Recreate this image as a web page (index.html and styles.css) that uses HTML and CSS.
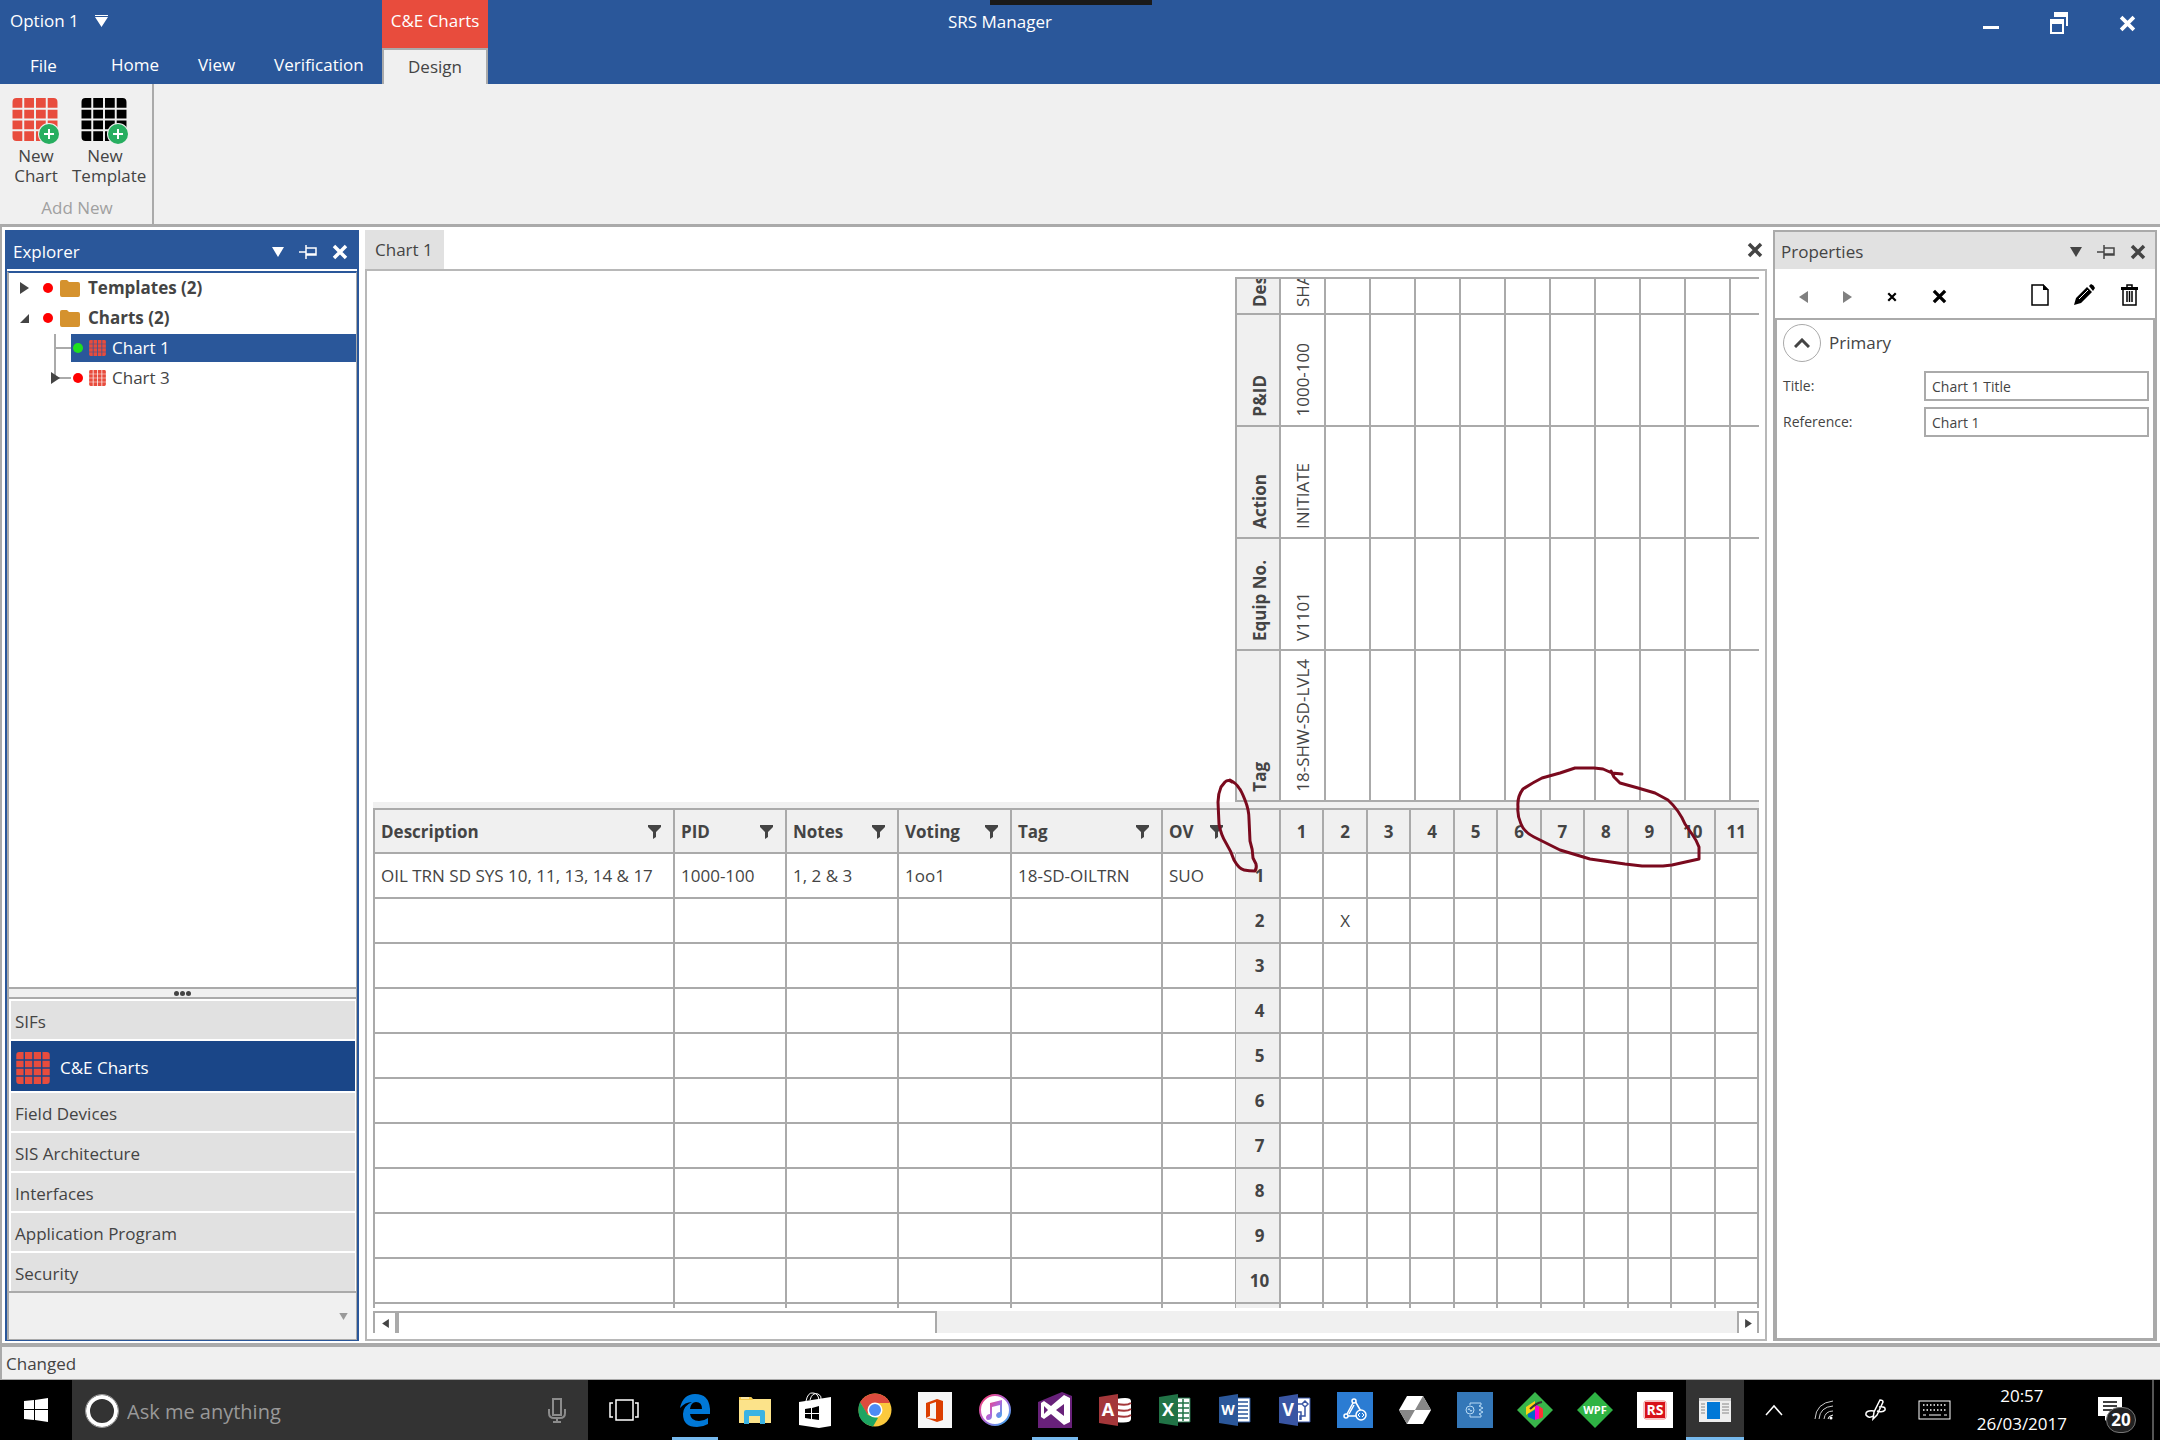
FILE: index.html
```html
<!DOCTYPE html>
<html lang="en">
<head>
  <meta charset="UTF-8">
  <meta name="viewport" content="width=device-width, initial-scale=1.0">
  <title>SRS Manager</title>
  <link rel="stylesheet" href="styles.css">
</head>

<body>
  <!-- shared icons -->
  <svg class="sprite" aria-hidden="true">
    <symbol id="grid" viewBox="0 0 46 44">
      <path d="M4 0h6v10H0V4q0-4 4-4zM12 0h10v10H12zM24 0h10v10H24zM36 0h6q4 0 4 4v6H36zM0 12h10v9H0zM12 12h10v9H12zM24 12h10v9H24zM36 12h10v9H36zM0 23h10v9H0zM12 23h10v9H12zM24 23h10v9H24zM36 23h10v9H36zM0 34h10v10H4q-4 0-4-4zM12 34h10v10H12zM24 34h10v10H24zM36 34h10v6q0 4-4 4h-6z"/>
    </symbol>
    <symbol id="filter" viewBox="0 0 13 14"><path d="M0 0h13v2L8 7v5l-3 2V7L0 2z"/></symbol>
    <symbol id="close" viewBox="0 0 16 16"><path d="M2 2l12 12M14 2L2 14" fill="none" stroke="currentColor" stroke-width="3.500"/></symbol>
    <symbol id="pin" viewBox="0 0 18 14"><path d="M0 7h7M7 0v14M7 3h10v7H7M7 9h10" fill="none" stroke="currentColor" stroke-width="1.500"/></symbol>
    <symbol id="down" viewBox="0 0 12 10"><path d="M0 0h12L6 10z"/></symbol>
    <symbol id="right" viewBox="0 0 9 12"><path d="M0 0l9 6-9 6z"/></symbol>
    <symbol id="left" viewBox="0 0 9 12"><path d="M9 0L0 6l9 6z"/></symbol>
    <symbol id="folder" viewBox="0 0 20 17"><path d="M0 2q0-2 2-2h5l2 2h9q2 0 2 2v11q0 2-2 2H2q-2 0-2-2z"/></symbol>
  </svg>

  <header class="title-bar">
    <button class="quick-option">Option 1
      <svg width="13" height="12" viewBox="0 0 13 12"><path d="M0 0h13v1H0zM0 2h13L6.500 12z"/></svg>
    </button>
    <nav class="menu">
      <a class="menu-file" href="#">File</a>
      <a class="menu-home" href="#">Home</a>
      <a href="#">View</a>
      <a href="#">Verification</a>
    </nav>
    <div class="context-tab">
      <span>C&amp;E Charts</span>
      <a href="#">Design</a>
    </div>
    <h1>SRS Manager</h1>
    <div class="notch"></div>
    <div class="window-buttons">
      <button aria-label="Minimize"><svg width="16" height="22"><path d="M0 14h16v3H0z"/></svg></button>
      <button aria-label="Restore"><svg width="18" height="22" viewBox="0 0 18 22"><path d="M4 0h14v14h-2V5H4zM0 7h14v15H0zm2 5v8h10v-8z" fill-rule="evenodd"/></svg></button>
      <button aria-label="Close"><svg width="17" height="17"><use href="#close"/></svg></button>
    </div>
  </header>

  <section class="ribbon">
    <div class="ribbon-group">
      <div class="ribbon-buttons">
        <button>
          <svg width="48" height="48" viewBox="0 0 48 48"><use class="red" href="#grid" width="46" height="43"/><circle cx="37" cy="36" r="11" fill="#f0f0f0"/><circle cx="37" cy="36" r="10" fill="#27ae60"/><path d="M32 36h10M37 31v10" stroke="#fff" stroke-width="2"/></svg>
          New<br>Chart
        </button>
        <button>
          <svg width="48" height="48" viewBox="0 0 48 48"><use href="#grid" fill="#000" width="46" height="43"/><circle cx="37" cy="36" r="11" fill="#f0f0f0"/><circle cx="37" cy="36" r="10" fill="#27ae60"/><path d="M32 36h10M37 31v10" stroke="#fff" stroke-width="2"/></svg>
          New<br>Template
        </button>
      </div>
      <p>Add New</p>
    </div>
  </section>

  <main class="workspace">
    <aside class="explorer">
      <div class="panel-header">
        <h2>Explorer</h2>
        <button aria-label="Explorer menu"><svg width="12" height="10"><use href="#down"/></svg></button>
        <button aria-label="Pin Explorer"><svg width="18" height="14"><use href="#pin"/></svg></button>
        <button aria-label="Close Explorer"><svg width="16" height="16"><use href="#close"/></svg></button>
      </div>
      <div class="explorer-body">
        <ul class="tree">
          <li class="folder"><svg class="arrow" width="9" height="12"><use href="#right"/></svg><i class="dot"></i><svg class="folder-icon" width="20" height="17"><use href="#folder"/></svg>Templates (2)</li>
          <li class="folder"><svg class="arrow" width="9" height="9"><path d="M9 0v9H0z"/></svg><i class="dot"></i><svg class="folder-icon" width="20" height="17"><use href="#folder"/></svg>Charts (2)</li>
          <li class="child">
            <svg class="branch" width="28" height="30"><path d="M12 1v29M12 15h16" stroke="#aaa" stroke-width="2"/></svg>
            <span class="selected"><i class="dot green"></i><svg class="red" width="17" height="16"><use href="#grid"/></svg>Chart 1</span>
          </li>
          <li class="child">
            <svg class="branch" width="28" height="30"><path d="M12 0v15h16" fill="none" stroke="#aaa" stroke-width="2"/><path d="M8 9l9 6-9 6z"/></svg>
            <span><i class="dot"></i><svg class="red" width="17" height="16"><use href="#grid"/></svg>Chart 3</span>
          </li>
        </ul>
        <div class="splitter"><i></i><i></i><i></i></div>
        <nav class="sections">
          <a href="#">SIFs</a>
          <a class="active" href="#"><svg class="red" width="34" height="32"><use href="#grid"/></svg>C&amp;E Charts</a>
          <a href="#">Field Devices</a>
          <a href="#">SIS Architecture</a>
          <a href="#">Interfaces</a>
          <a href="#">Application Program</a>
          <a href="#">Security</a>
        </nav>
        <div class="sections-footer"><svg width="9" height="7"><use href="#down"/></svg></div>
      </div>
    </aside>

    <section class="document">
      <div class="tabs">
        <a class="tab" href="#">Chart 1</a>
        <button aria-label="Close chart"><svg width="16" height="16"><use href="#close"/></svg></button>
      </div>
      <div class="chart">
        <div class="effects">
          <table id="effects"></table>
        </div>
        <div class="divider"></div>
        <div class="causes">
          <table id="causes">
            <thead></thead>
            <tbody></tbody>
          </table>
          <table id="matrix">
            <thead></thead>
            <tbody></tbody>
          </table>
        </div>
        <div class="scrollbar">
          <button aria-label="Scroll left"><svg width="7" height="9"><use href="#left"/></svg></button>
          <div class="track"><div class="thumb"></div></div>
          <button aria-label="Scroll right"><svg width="7" height="9"><use href="#right"/></svg></button>
        </div>
        <svg class="ink" width="1402" height="700" viewBox="365 269 1402 700">
          <path d="M1232 782Q1228 779 1225 782L1221 787Q1218 794 1218 802L1219 824Q1221 835 1226 843T1234 860Q1239 869 1244 870T1255 871Q1257 868 1256 864L1253 858Q1253 850 1250 841L1249 819Q1249 810 1245 800T1239 788Q1236 783 1230 780"/>
          <path d="M1622 774L1612 773 1603 769 1594 768H1575L1560 773 1542 778Q1532 783 1523 789 1517 797 1518 807 1517 815 1521 824 1524 832 1534 837L1542 841 1560 850 1590 859 1625 864 1642 866H1663L1672 865 1699 859V847Q1697 841 1692 834L1685 824Q1679 810 1668 800L1655 793 1638 788 1620 783 1614 777 1611 771"/>
        </svg>
      </div>
    </section>

    <aside class="properties">
      <div class="panel-header">
        <h2>Properties</h2>
        <button aria-label="Properties menu"><svg width="12" height="10"><use href="#down"/></svg></button>
        <button aria-label="Pin Properties"><svg width="18" height="14"><use href="#pin"/></svg></button>
        <button aria-label="Close Properties"><svg width="16" height="16"><use href="#close"/></svg></button>
      </div>
      <div class="toolbar">
        <button aria-label="Previous" disabled><svg width="9" height="12"><use href="#left"/></svg></button>
        <button aria-label="Next" disabled><svg width="9" height="12"><use href="#right"/></svg></button>
        <button aria-label="Remove"><svg width="10" height="10"><use href="#close"/></svg></button>
        <button aria-label="Remove all"><svg width="15" height="15"><use href="#close"/></svg></button>
        <span class="spacer"></span>
        <button aria-label="New"><svg width="18" height="22" viewBox="0 0 18 22"><path d="M1 1h11l5 5v15H1z" fill="#fff" stroke="#000" stroke-width="1.500"/><path d="M12 0l6 6h-6z"/></svg></button>
        <button aria-label="Edit"><svg width="22" height="22" viewBox="0 0 22 22"><path d="M0 21l2-7L13 3l5 5L7 19zM15 2l2-2q3 1 4 4l-2 3z"/><path d="M5 15l9-9" stroke="#fff"/></svg></button>
        <button aria-label="Delete"><svg width="17" height="22" viewBox="0 0 17 22"><path d="M0 3h17v3H0z"/><path d="M6 3V1h5v2M2 6v15h13V6M6 7v11M8.500 7v11M11 7v11" fill="none" stroke="#000" stroke-width="1.500"/></svg></button>
      </div>
      <form class="properties-body">
        <div class="group-title">
          <button type="button" aria-label="Collapse Primary"><svg width="16" height="10"><path d="M1 9l7-7 7 7" fill="none" stroke="#444" stroke-width="3"/></svg></button>
          Primary
        </div>
        <div class="field"><label for="title">Title:</label><input id="title" type="text" value="Chart 1 Title"></div>
        <div class="field"><label for="reference">Reference:</label><input id="reference" type="text" value="Chart 1"></div>
      </form>
    </aside>
  </main>

  <footer class="status-bar">Changed</footer>

  <div class="taskbar">
    <button class="start" aria-label="Start"><svg width="24" height="24" viewBox="0 0 24 24"><path d="M0 3l10-1v9H0zM11 2l13-2v11H11zM0 12h10v10L0 21zM11 12h13v12l-13-2z" fill="#fff"/></svg></button>
    <div class="search">
      <svg width="36" height="36"><circle cx="18" cy="18" r="14" fill="none" stroke="#fff" stroke-width="4"/><circle cx="18" cy="18" r="16.500" fill="none" stroke="#999"/></svg>
      <input type="text" placeholder="Ask me anything" aria-label="Search">
      <svg width="18" height="26" viewBox="0 0 18 26"><path d="M5 1h8v16H5zM1 11v4q0 5 5 5h6q5 0 5-5v-4M9 20v4M5 24h8" fill="none" stroke="#8c8c8c" stroke-width="2"/></svg>
    </div>
    <button class="task-view" aria-label="Task view"><svg width="30" height="22"><path d="M7 1h17v20H7zM4 4H1v14h3M26 4h3v14h-3" fill="none" stroke="#fff" stroke-width="1.500"/></svg></button>
    <div class="apps">
      <button class="running" aria-label="Edge"><svg viewBox="0 0 36 36"><path d="M3 16Q6 2 18 2q14 0 15 15v5H13q1 7 9 7 5 0 9-3v6q-5 3-11 3Q6 35 6 22q0-8 9-12-7 0-12 6zm10 1h12q0-7-6-7-5 0-6 7z" fill="#0078d7" fill-rule="evenodd"/></svg></button>
      <button aria-label="File Explorer"><svg viewBox="0 0 36 36"><path d="M2 5h12l2 2h18v24H2z" fill="#fce38a"/><path d="M2 5h12l2 3H2z" fill="#f3c94b"/><path d="M4 6h8" stroke="#fff"/><path d="M7 32V20q0-2 2-2h17q2 0 2 2v12h-5v-8H12v8z" fill="#3bb3e3"/></svg></button>
      <button aria-label="Store"><svg viewBox="0 0 36 36"><path d="M2 10l32-5v29l-12 2-20-3z" fill="#fff"/><path d="M9 9q2-9 7-8 5 0 6 7M13 8q2-8 8-6 4 2 3 5" fill="none" stroke="#fff"/><path d="M8 17l6-1v5H8zM15 16l7-2v7h-7zM8 22h6v5l-6-1zM15 22h7v6l-7-1z" fill="#000"/></svg></button>
      <button aria-label="Chrome"><svg viewBox="0 0 36 36"><circle cx="18" cy="18" r="16.500" fill="#fbc93d"/><path d="M18 18L10 22 3 10Q8 2 18 1.500 29 2 33 11H18z" fill="#dd4b3e"/><path d="M3 10l8 13 10 3-5 8.500Q1 31 1.500 18q0-5 1.500-8z" fill="#1da462"/><circle cx="18" cy="18" r="7.500" fill="#fff"/><circle cx="18" cy="18" r="6" fill="#4c8bf5"/></svg></button>
      <button aria-label="Office"><svg viewBox="0 0 36 36"><path d="M1 0h34v36H1z" fill="#f6f6f6"/><path d="M9 11l11-4 6 2v19l-6 2-11-4 10 1V10l-6 2v12l-4 2z" fill="#dc3e00"/></svg></button>
      <button aria-label="iTunes"><svg viewBox="0 0 36 36"><defs><linearGradient id="tunes" x2="1" y2="1"><stop stop-color="#fa3c6a"/><stop offset=".5" stop-color="#b266d9"/><stop offset="1" stop-color="#2fb4f3"/></linearGradient></defs><circle cx="18" cy="18" r="15" fill="#fff" stroke="url(#tunes)" stroke-width="2"/><path d="M13 11l12-3v14q0 4-4 4-2-1-2-3 1-3 4-3v-7l-8 2v9q0 4-4 4-2 0-2-3 1-3 4-3z" fill="url(#tunes)"/></svg></button>
      <button class="running" aria-label="Visual Studio"><svg viewBox="0 0 36 36"><path d="M1 10L25 0l10 4v32H1z" fill="#68217a"/><path d="M27 3l6 3v24l-6 3-13-11-7 5-3-2V11l3-2 7 5zm0 9l-8 6 8 6zM7 14v8l4-4z" fill="#fff" fill-rule="evenodd"/></svg></button>
      <button aria-label="Access"><svg viewBox="0 0 36 36"><path d="M19 7q15-3 15 2v18q0 5-15 3z" fill="#fff"/><path d="M20 12q10 2 14-1M20 18q10 2 14-1M20 24q10 2 14-1" fill="none" stroke="#a4373a" stroke-width="2"/><path d="M2 5l19-3v32L2 31z" fill="#a4373a"/><text x="11" y="24">A</text></svg></button>
      <button aria-label="Excel"><svg viewBox="0 0 36 36"><path d="M20 6h13v24H20z" fill="#fff" stroke="#217346" stroke-width="1"/><path d="M20 11h12M20 16h12M20 21h12M20 26h12M26 7v22" stroke="#217346" stroke-width="1.500"/><path d="M2 5l19-3v32L2 31z" fill="#217346"/><text x="11" y="24">X</text></svg></button>
      <button aria-label="Word"><svg viewBox="0 0 36 36"><path d="M20 6h13v24H20z" fill="#fff" stroke="#2b579a" stroke-width="1"/><path d="M20 10h11M20 14h11M20 18h11M20 22h11M20 26h11" stroke="#2b579a" stroke-width="1.500"/><path d="M2 5l19-3v32L2 31z" fill="#2b579a"/><text class="wide" x="11" y="23">W</text></svg></button>
      <button aria-label="Visio"><svg viewBox="0 0 36 36"><path d="M20 6h13v24H20z" fill="#fff" stroke="#3955a3" stroke-width="1"/><path d="M20 12h5l3-3 3 3-3 3-3-3M28 15v9h-5v4M20 20h4v8" fill="none" stroke="#3955a3" stroke-width="1.500"/><path d="M2 5l19-3v32L2 31z" fill="#3955a3"/><text x="11" y="24">V</text></svg></button>
      <button aria-label="Designer"><svg viewBox="0 0 36 36"><path d="M0 0h36v36H0z" fill="#2b7cd3"/><path d="M17 9L9 24h15M17 13l-5 9M18 9l7 12" fill="none" stroke="#fff" stroke-width="1.500"/><g fill="#2b7cd3" stroke="#fff" stroke-width="1.500"><circle cx="17" cy="9" r="2"/><circle cx="9" cy="24" r="2"/><circle cx="24" cy="23" r="5"/></g><path d="M23 21l-2 2 2 2M25 21l2 2-2 2" fill="none" stroke="#fff"/></svg></button>
      <button aria-label="Hexagon"><svg viewBox="0 0 36 36"><path d="M10 4h16l8 14-8 14H10L2 18z" fill="#fff"/><path d="M2 18h16l-8 14zM26 4l8 14H18z" fill="#888"/></svg></button>
      <button aria-label="Circuits"><svg viewBox="0 0 36 36"><path d="M0 0h36v36H0z" fill="#3477b8"/><path d="M13 13v-2h11v2l-2 1 4 2-4 2 4 2-4 2 2 1v2H13v-2" fill="none" stroke="#b9dbf5"/><circle cx="13" cy="18" r="4" fill="#3477b8" stroke="#b9dbf5"/><path d="M11 18q1-3 2 0t2 0" fill="none" stroke="#b9dbf5"/></svg></button>
      <button aria-label="Cube"><svg viewBox="0 0 36 36"><path d="M18 0l18 18-18 18L0 18z" fill="#39b54a"/><path d="M9 15l9-6v8l-9 6z" fill="#fcd116"/><path d="M18 12l8 5v8l-8 3z" fill="#f0c"/><path d="M22 14l4 3v8l-4 2z" fill="#f33"/><path d="M11 22l7-4v10l-7-3z" fill="#06c"/><path d="M13 17q6-6 12-7" stroke="#333" stroke-width="2" fill="none"/></svg></button>
      <button aria-label="WPF"><svg viewBox="0 0 36 36"><path d="M18 0l18 18-18 18L0 18z" fill="#2fb344"/><text class="small" x="18" y="22">WPF</text></svg></button>
      <button aria-label="RS"><svg viewBox="0 0 36 36"><path d="M0 0h36v36H0z" fill="#fff"/><rect x="7" y="9" width="22" height="18" rx="2" fill="#fff" stroke="#e88"/><path d="M8 10h20v16H8z" fill="#d8121a"/><text x="18" y="23" class="rs">RS</text></svg></button>
      <button class="running current" aria-label="SRS Manager"><svg viewBox="0 0 36 36"><path d="M2 6h32v24H2z" fill="#eee"/><path d="M2 6h32v3H2z" fill="#ccc"/><path d="M10 10h13v17H10z" fill="#0078d7"/><path d="M4 12h4M4 15h4M4 18h4M4 21h4M25 12h7M25 15h7M25 18h7M25 21h7" stroke="#888"/></svg></button>
    </div>
    <div class="tray">
      <button aria-label="Show hidden icons"><svg width="18" height="12"><path d="M1 11l8-9 8 9" fill="none" stroke="#fff" stroke-width="1.500"/></svg></button>
      <button aria-label="Network"><svg width="20" height="20"><path d="M1 19Q2 3 19 1M5 19Q6 7 19 6M10 19q1-8 9-8" fill="none" stroke="#ccc"/><path d="M14 19q0-3 5-4" fill="none" stroke="#fff"/><circle cx="17" cy="18" r="1.500" fill="#fff"/></svg></button>
      <button aria-label="Pen"><svg width="22" height="22" viewBox="0 0 22 22"><path d="M8 20l1-7 6-12q3 0 3 2l-6 13zM9 12Q0 11 1 16q3 4 7 1M14 8q7-1 6 3-2 3-8 1" fill="none" stroke="#fff" stroke-width="1.500"/></svg></button>
      <button aria-label="Keyboard"><svg width="34" height="20"><rect x="1" y="1" width="31" height="18" fill="none" stroke="#fff"/><path d="M5 5h24M5 10h24" stroke="#fff" stroke-width="1.500" stroke-dasharray="1.500 2"/><path d="M5 15h3M11 15h12M26 15h3" stroke="#fff"/></svg></button>
      <time datetime="2017-03-26T20:57">20:57<br>26/03/2017</time>
      <button class="notifications" aria-label="Notifications"><svg width="24" height="26"><path d="M0 0h24v19H11l-4 5v-5H0z" fill="#fff"/><path d="M5 5h14M5 9h14M5 13h14" stroke="#000" stroke-width="1.500"/></svg><span>20</span></button>
    </div>
  </div>

  <script>
    const EFFECTS = 11;
    const ROWS = 11;
    const effectRows = [["Des", "SHA"], ["P&amp;ID", "1000-100"], ["Action", "INITIATE"], ["Equip No.", "V1101"], ["Tag", "18-SHW-SD-LVL4"]];
    const causeColumns = ["Description", "PID", "Notes", "Voting", "Tag", "OV"];
    const causes = [["OIL TRN SD SYS 10, 11, 13, 14 &amp; 17", "1000-100", "1, 2 &amp; 3", "1oo1", "18-SD-OILTRN", "SUO"]];
    const marks = { "2-2": "X" };

    const range = count => Array(count).fill().map((_, index) => index + 1);

    document.getElementById("effects").innerHTML = effectRows.map(([name, value]) => `
      <tr>
        <th scope="row"><span>${name}</span></th>
        ${range(EFFECTS).map(n => `<td>${n == 1 ? `<span>${value}</span>` : ""}</td>`).join("")}
      </tr>`).join("");

    document.querySelector("#causes thead").innerHTML = `<tr>${causeColumns.map(name => `
      <th scope="col"><div>${name}<button aria-label="Filter ${name}"><svg width="13" height="14"><use href="#filter"/></svg></button></div></th>`).join("")}</tr>`;

    document.querySelector("#causes tbody").innerHTML = range(ROWS).map(row => `
      <tr>${causeColumns.map((_, i) => `<td>${causes[row - 1] ? causes[row - 1][i] : ""}</td>`).join("")}</tr>`).join("");

    document.querySelector("#matrix thead").innerHTML = `
      <tr><td></td>${range(EFFECTS).map(n => `<th scope="col">${n}</th>`).join("")}</tr>`;

    document.querySelector("#matrix tbody").innerHTML = range(ROWS).map(row => `
      <tr>
        <th scope="row">${row < ROWS ? row : ""}</th>
        ${range(EFFECTS).map(n => `<td>${marks[row + "-" + n] || ""}</td>`).join("")}
      </tr>`).join("");
  </script>
</body>
</html>
```
FILE: styles.css
```css
*{
  box-sizing: border-box;
}
body{
  margin: 0;
  height: 100vh;
  display: flex;
  flex-direction: column;
  font-family: "Open Sans", sans-serif;
  font-size: 17px;
  line-height: 20px;
  color: #444;
  background: #fff;
  overflow: hidden;
}
button{
  font: inherit;
  color: inherit;
  background: none;
  border: 0;
  padding: 0;
  display: flex;
  align-items: center;
  justify-content: center;
}
a{
  color: inherit;
  text-decoration: none;
}
h1, h2, p, ul{
  margin: 0;
  padding: 0;
  font-size: 17px;
  font-weight: normal;
}
svg{
  display: block;
  flex: none;
  fill: currentColor;
}
.sprite{
  position: absolute;
  width: 0;
  height: 0;
}
.red{
  fill: #e84c3d;
}

/* title bar and menu */
.title-bar{
  flex: none;
  height: 84px;
  display: grid;
  grid-template-columns: 382px 106px 1fr auto;
  grid-template-rows: 42px 42px;
  background: #2a579a;
  color: #fff;
}
.quick-option{
  justify-self: start;
  gap: 16px;
  padding-left: 10px;
}
.menu{
  grid-row: 2;
  grid-column: 1;
  display: flex;
  gap: 39px;
  padding: 13px 0 0 30px;
}
.menu-file{
  padding-top: 1px;
}
.menu-home{
  margin-left: 15px;
}
.context-tab{
  grid-row: 1 / 3;
  grid-column: 2;
  display: flex;
  flex-direction: column;
  text-align: center;
}
.context-tab span{
  height: 48px;
  line-height: 42px;
  background: #e84c3d;
}
.context-tab a{
  flex: 1;
  line-height: 34px;
  color: #444;
  background: #f0f0f0;
  border: 2px solid #aaa;
  border-bottom: 0;
}
.title-bar h1{
  grid-row: 1;
  grid-column: 3;
  padding-left: 460px;
  line-height: 43px;
}
.notch{
  position: absolute;
  top: 0;
  left: 990px;
  width: 162px;
  height: 5px;
  background: #1a1a1a;
}
.window-buttons{
  display: flex;
  align-items: center;
  gap: 51px;
  padding: 4px 24px 0 0;
}

/* ribbon */
.ribbon{
  flex: none;
  height: 143px;
  display: flex;
  background: #f0f0f0;
  border-bottom: 3px solid #aaa;
}
.ribbon-group{
  width: 154px;
  padding-top: 14px;
  border-right: 2px solid #aaa;
  text-align: center;
}
.ribbon-buttons{
  display: grid;
  grid-template-columns: 72px 66px;
}
.ribbon-buttons button{
  display: block;
}
.ribbon-buttons svg{
  margin: 0 auto;
}
.ribbon-group p{
  margin-top: 12px;
  padding-left: 2px;
  color: #a0a0a0;
}

/* docked panels */
.workspace{
  flex: 1;
  min-height: 0;
  display: flex;
  padding: 3px 3px 2px 3px;
  border-left: 2px solid #aaa;
}
.panel-header{
  flex: none;
  height: 39px;
  display: flex;
  align-items: center;
  gap: 15px;
  padding: 4px 9px 0 6px;
}
.panel-header h2{
  flex: 1;
}

/* explorer */
.explorer{
  flex: none;
  width: 354px;
  margin-right: 6px;
  display: flex;
  flex-direction: column;
  border: 2px solid #2a579a;
  border-width: 0 2px 1px;
}
.explorer .panel-header{
  height: 41px;
  color: #fff;
  background: #2a579a;
  border-bottom: 2px solid #fff;
}
.explorer-body{
  flex: 1;
  min-height: 0;
  display: flex;
  flex-direction: column;
  border: 1px solid #aaa;
  border-top: 2px solid #2a579a;
  border-left-width: 2px;
}
.tree{
  flex: 1;
  list-style: none;
}
.tree li{
  height: 30px;
  display: flex;
  align-items: center;
}
.folder{
  padding-left: 11px;
  font-weight: bold;
}
.folder-icon{
  margin: 0 8px 0 7px;
  fill: #d5922e;
}
.dot{
  width: 10px;
  height: 10px;
  border-radius: 50%;
  background: #f00;
}
.dot.green{
  background: #1fe01f;
}
.folder .dot{
  margin-left: 14px;
}
.branch{
  margin-left: 34px;
}
.child span{
  flex: 1;
  height: 28px;
  display: flex;
  align-items: center;
  gap: 6px;
  padding-left: 2px;
}
.child .selected{
  color: #fff;
  background: #2a579a;
}
.splitter{
  height: 12px;
  display: flex;
  align-items: center;
  justify-content: center;
  gap: 1px;
  background: #f0f0f0;
  border: 2px solid #aaa;
  border-width: 2px 0;
}
.splitter i{
  width: 5px;
  height: 5px;
  border-radius: 50%;
  background: #444;
}
.sections{
  display: flex;
  flex-direction: column;
  gap: 2px;
  padding: 2px 1px 0 2px;
}
.sections a{
  height: 38px;
  display: flex;
  align-items: center;
  gap: 10px;
  padding: 3px 4px 0;
  background: #e1e1e1;
}
.sections .active{
  height: 50px;
  padding-left: 5px;
  color: #fff;
  background: #1a4688;
}
.sections-footer{
  height: 48px;
  display: flex;
  align-items: center;
  justify-content: flex-end;
  padding-right: 8px;
  color: #999;
  background: #f0f0f0;
  border-top: 2px solid #aaa;
}

/* chart document */
.document{
  flex: 1;
  min-width: 0;
  display: flex;
  flex-direction: column;
}
.tabs{
  height: 39px;
  display: flex;
  justify-content: space-between;
  padding-right: 4px;
}
.tab{
  padding: 10px 11px 0 10px;
  background: #e1e1e1;
}
.chart{
  position: relative;
  flex: 1;
  min-height: 0;
  display: flex;
  flex-direction: column;
  padding: 6px;
  border: 2px solid #b8b8b8;
}
table{
  flex: none;
  table-layout: fixed;
  border-collapse: separate;
  border-spacing: 0;
}
th, td{
  padding: 0;
  border: 0 solid #aaa;
  border-width: 0 2px 2px 0;
}
th{
  background: #f0f0f0;
}
.effects{
  flex: none;
  display: flex;
  margin-left: 862px;
  border-top: 2px solid #aaa;
  overflow: hidden;
}
#effects{
  width: 541px;
}
#effects tr{
  height: 112px;
}
#effects tr:first-child{
  height: 36px;
}
#effects tr:last-child{
  height: 151px;
}
#effects th, #effects td{
  width: 45px;
  vertical-align: bottom;
}
#effects th{
  width: 46px;
  padding-left: 4px;
  border-left-width: 2px;
}
#effects span{
  display: block;
  margin: 0 auto 8px;
  line-height: 22px;
  writing-mode: vertical-rl;
  transform: rotate(180deg);
  white-space: nowrap;
}
#effects tr:first-child span{
  max-height: 28px;
  margin-bottom: 6px;
  overflow: hidden;
}
.divider{
  flex: none;
  height: 6px;
  background: #f0f0f0;
}
.causes{
  flex: 1;
  min-height: 0;
  display: flex;
  overflow: hidden;
  border-top: 2px solid #aaa;
}
.causes tr{
  height: 45px;
}
.causes thead tr{
  height: 44px;
}
#causes{
  width: 862px;
  border-left: 2px solid #aaa;
}
#causes th, #causes td{
  width: 112px;
  padding: 1px 0 0 6px;
  text-align: left;
  white-space: nowrap;
}
#causes th:nth-child(1){
  width: 300px;
}
#causes th:nth-child(4){
  width: 113px;
}
#causes th:nth-child(5){
  width: 151px;
}
#causes th:last-child, #causes td:last-child{
  width: 72px;
  border-right-width: 0;
}
#causes th div{
  display: flex;
  align-items: center;
  justify-content: space-between;
  padding-right: 12px;
}
#matrix{
  width: calc(100% - 862px);
}
#matrix th, #matrix td{
  padding-top: 1px;
  text-align: center;
}
#matrix tr > :first-child{
  width: 46px;
  padding-left: 4px;
  border-left-width: 1px;
}
#matrix thead td{
  background: #f0f0f0;
  border-left-color: #f0f0f0;
}
.scrollbar{
  flex: none;
  height: 22px;
  display: flex;
  margin-top: 3px;
  background: #f0f0f0;
}
.scrollbar button{
  width: 22px;
  background: #fff;
  border: 2px solid #aaa;
  border-width: 2px 0 0 2px;
}
.scrollbar button:last-child{
  border-right-width: 2px;
}
.track{
  flex: 1;
}
.thumb{
  width: calc(40% + 5px);
  height: 22px;
  background: #fff;
  border: 2px solid #aaa;
  border-width: 2px 2px 0 4px;
}
.ink{
  position: absolute;
  top: -2px;
  left: -2px;
  fill: none;
  stroke: #7a0a1e;
  stroke-width: 3px;
  stroke-linejoin: round;
  stroke-linecap: round;
  pointer-events: none;
}

/* properties */
.properties{
  flex: none;
  width: 384px;
  margin-left: 6px;
  display: flex;
  flex-direction: column;
  border: 2px solid #aaa;
}
.properties .panel-header{
  height: 37px;
  padding-top: 3px;
  background: #e1e1e1;
}
.toolbar{
  height: 51px;
  display: flex;
  align-items: center;
  padding: 6px 17px 0 24px;
  color: #000;
  border-bottom: 2px solid #aaa;
}
.toolbar button{
  margin-right: 35px;
}
.toolbar button:disabled{
  color: #808080;
}
.toolbar .spacer{
  flex: 1;
}
.toolbar .spacer ~ button{
  margin: 0 0 4px 25px;
}
.properties-body{
  flex: 1;
  padding: 4px 4px 4px 6px;
  border: 2px solid #aaa;
  border-width: 0 2px 1px;
}
.group-title{
  display: flex;
  align-items: center;
  gap: 8px;
  margin-bottom: 9px;
}
.group-title button{
  width: 38px;
  height: 38px;
  border: 1px solid #aaa;
  border-radius: 50%;
}
.field{
  display: flex;
  align-items: center;
  margin-bottom: 6px;
  font-size: 14px;
}
.field label{
  width: 141px;
}
.field input{
  flex: 1;
  min-width: 0;
  height: 30px;
  padding: 1px 6px 0;
  font: inherit;
  color: inherit;
  background: #fff;
  border: 2px solid #aaa;
}

.status-bar{
  flex: none;
  height: 37px;
  padding: 7px 4px 0;
  background: #f0f0f0;
  border: 2px solid #aaa;
  border-width: 4px 0 1px 2px;
}

/* taskbar */
.taskbar{
  flex: none;
  height: 60px;
  display: flex;
  color: #fff;
  background: #000;
}
.start{
  width: 72px;
}
.search{
  width: 516px;
  display: flex;
  align-items: center;
  gap: 7px;
  padding: 2px 22px 0 12px;
  background: #333;
}
.search input{
  flex: 1;
  min-width: 0;
  padding: 0;
  font: inherit;
  font-size: 20px;
  background: none;
  border: 0;
}
.search input::placeholder{
  color: #999;
}
.task-view{
  width: 72px;
  margin-right: 6px;
}
.apps{
  display: flex;
  gap: 2px;
}
.apps button{
  width: 58px;
  border: 3px solid transparent;
  border-width: 3px 0;
}
.apps svg{
  width: 36px;
  height: 36px;
}
.apps .running{
  width: 46px;
  margin: 0 6px;
  border-bottom-color: #76b9ed;
}
.apps .current{
  width: 58px;
  margin: 0;
  border-top-color: #333;
  background: #333;
}
.apps text{
  font-size: 18px;
  font-weight: bold;
  text-anchor: middle;
  fill: #fff;
}
.apps .wide{
  font-size: 14px;
}
.apps .small{
  font-size: 11px;
}
.apps .rs{
  font-size: 14px;
}
.tray{
  flex: 1;
  display: flex;
  align-items: center;
  justify-content: flex-end;
  gap: 31px;
  margin-right: 6px;
  padding-right: 30px;
  border-right: 2px solid #555;
}
.tray time{
  margin-left: -6px;
  line-height: 28px;
  text-align: center;
}
.notifications{
  position: relative;
}
.notifications span{
  position: absolute;
  top: 10px;
  left: 8px;
  width: 30px;
  height: 26px;
  border: 1px solid #777;
  border-radius: 13px;
  line-height: 24px;
  font-weight: bold;
  background: #222;
}
```
